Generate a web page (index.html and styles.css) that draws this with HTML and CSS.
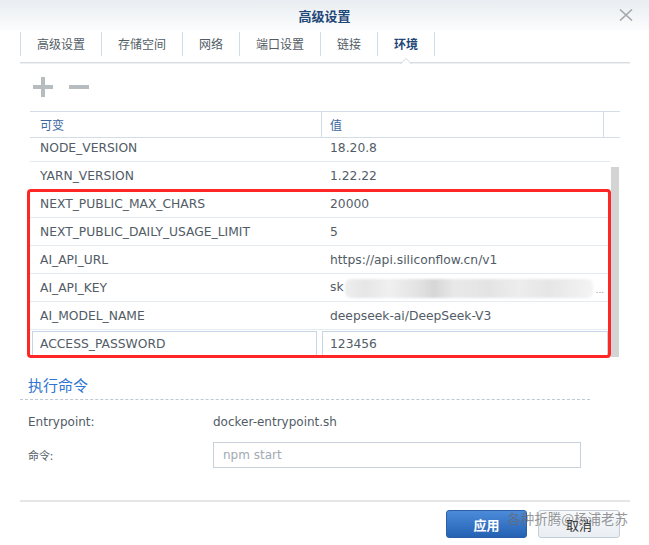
FILE: index.html
```html
<!DOCTYPE html>
<html lang="zh-CN">
<head>
<meta charset="UTF-8">
<title>高级设置</title>
<meta name="viewport" content="width=device-width, initial-scale=1.0">

<link rel="stylesheet" href="styles.css">
</head>

<body>

<div class="dialog">

    <div class="titlebar">
        <span class="title">高级设置</span>
        <svg class="close" width="14" height="12" viewBox="0 0 14 12">
            <path d="M1 0.5 L13 11.5 M13 0.5 L1 11.5" stroke="#a3a8ad" stroke-width="1.6" fill="none"/>
        </svg>
    </div>

    <div class="tabs">
        <span class="tab">高级设置</span>
        <span class="tab">存储空间</span>
        <span class="tab">网络</span>
        <span class="tab">端口设置</span>
        <span class="tab">链接</span>
        <span class="tab active">环境</span>
    </div>

    <div class="toolbar">
        <svg width="20" height="20" viewBox="0 0 20 20">
            <rect x="8" y="0" width="4" height="20" fill="#b7bcc1"/>
            <rect x="0" y="8" width="20" height="4" fill="#b7bcc1"/>
        </svg>
        <svg width="20" height="20" viewBox="0 0 20 20">
            <rect x="0" y="8" width="20" height="4" fill="#b7bcc1"/>
        </svg>
    </div>

    <!-- environment variables -->
    <div class="grid">
        <div class="grid-head">
            <div class="head-name">可变</div>
            <div class="head-value">值</div>
            <div class="head-pad"></div>
        </div>
        <div class="grid-main">
            <div class="grid-body">
                <div class="rows">
                    <div class="row"><div class="cell-name">NODE_VERSION</div><div class="cell-value">18.20.8</div></div>
                    <div class="row"><div class="cell-name">YARN_VERSION</div><div class="cell-value">1.22.22</div></div>
                    <div class="row"><div class="cell-name">NEXT_PUBLIC_MAX_CHARS</div><div class="cell-value">20000</div></div>
                    <div class="row"><div class="cell-name">NEXT_PUBLIC_DAILY_USAGE_LIMIT</div><div class="cell-value">5</div></div>
                    <div class="row"><div class="cell-name">AI_API_URL</div><div class="cell-value">https://api.siliconflow.cn/v1</div></div>
                    <div class="row">
                        <div class="cell-name">AI_API_KEY</div>
                        <div class="cell-value key">sk<span class="mosaic"></span><span class="more">...</span></div>
                    </div>
                    <div class="row"><div class="cell-name">AI_MODEL_NAME</div><div class="cell-value">deepseek-ai/DeepSeek-V3</div></div>
                    <div class="row editing">
                        <div class="cell-name"><div class="edit">ACCESS_PASSWORD</div></div>
                        <div class="cell-value"><div class="edit">123456</div></div>
                    </div>
                </div>
            </div>
            <div class="scrollbar"><div class="thumb"></div></div>
        </div>
        <div class="highlight"></div>
    </div>

    <div class="exec">
        <div class="exec-title">执行命令</div>
        <div class="form-row first">
            <span class="form-label">Entrypoint:</span>
            <span>docker-entrypoint.sh</span>
        </div>
        <div class="form-row">
            <span class="form-label cjk">命令:</span>
            <input class="cmd" type="text" placeholder="npm start">
        </div>
    </div>

    <div class="footer">
        <button class="btn primary">应用</button>
        <button class="btn">取消</button>
    </div>

    <div class="watermark">各种折腾@杨浦老苏</div>

</div>

</body>
</html>
```

FILE: styles.css
```css
* {
    margin: 0;
    padding: 0;
    box-sizing: border-box;
}

body {
    width: 649px;
    height: 545px;
    overflow: hidden;
    background: #fff;
    font-family: "DejaVu Sans", "Noto Sans CJK SC", sans-serif;
    color: #525c66;
}

.dialog {
    position: relative;
    height: 545px;
    display: flex;
    flex-direction: column;
}

.titlebar {
    height: 30px;
    position: relative;
    display: flex;
    align-items: center;
    justify-content: center;
    background: linear-gradient(#e9edf1, #fbfcfd);
}

.title {
    font-family: "Noto Sans CJK SC", sans-serif;
    font-size: 13px;
    font-weight: bold;
    color: #1f4778;
}

.close {
    position: absolute;
    right: 16px;
    top: 9px;
}

/* Tabs */
.tabs {
    display: flex;
    height: 33px;
    margin: 0 19px 0 20px;
    border-bottom: 1px solid #d8dde2;
    box-shadow: 0 1px 0 #eef0f2;
}

.tab {
    position: relative;
    margin-top: 2px;
    height: 24px;
    padding: 0 16px;
    border-left: 1px solid #d3dde7;
    font-family: "Noto Sans CJK SC", sans-serif;
    font-size: 12px;
    line-height: 24px;
    color: #525c66;
}

.tab:last-child {
    border-right: 1px solid #d3dde7;
}

.tab.active {
    font-weight: bold;
    color: #1f4778;
}

.tab.active::before,
.tab.active::after {
    content: "";
    position: absolute;
    left: 50%;
    width: 0;
    height: 0;
    border-style: solid;
    border-color: transparent;
}

.tab.active::before {
    bottom: -8px;
    margin-left: -6px;
    border-width: 0 6px 6px;
    border-bottom-color: #d3d8dd;
}

.tab.active::after {
    bottom: -8px;
    margin-left: -5px;
    border-width: 0 5px 5px;
    border-bottom-color: #fff;
}

/* Toolbar */
.toolbar {
    display: flex;
    gap: 16px;
    height: 48px;
    padding: 14px 0 0 33px;
}

/* Grid */
.grid {
    position: relative;
    width: 590px;
    margin-left: 30px;
}

.grid-head {
    display: flex;
    height: 27px;
    border-top: 1px solid #d3dde8;
    border-bottom: 1px solid #d3dde8;
    font-family: "Noto Sans CJK SC", sans-serif;
    font-size: 12px;
    line-height: 26px;
    color: #3b68a0;
}

.head-name {
    width: 291px;
    padding-left: 10px;
}

.head-value {
    width: 282px;
    padding-left: 8px;
    border-left: 1px solid #d3dde8;
}

.head-pad {
    flex: 1;
    border-left: 1px solid #d3dde8;
}

.grid-main {
    display: flex;
    height: 220px;
}

.grid-body {
    width: 580px;
    overflow: hidden;
}

.rows {
    margin-top: -4px;
}

.row {
    display: flex;
    height: 28px;
    border-bottom: 1px solid #e6ebf0;
    font-size: 12.3px;
    line-height: 29px;
    white-space: nowrap;
}

.cell-name {
    width: 291px;
    padding-left: 10px;
}

.cell-value {
    flex: 1;
    padding-left: 9px;
}

.key {
    display: flex;
    align-items: center;
}

.mosaic {
    width: 248px;
    height: 19px;
    margin: 2px 0 0 1px;
    border-radius: 6px;
    background: linear-gradient(90deg, #eeeeee 0%, #e6e6e6 8%, #f0f0f0 18%, #e2e2e2 30%, #d6d6d6 36%, #e9e9e9 44%, #e4e4e4 58%, #ededed 70%, #e6e6e6 82%, #f4f4f4 100%);
    filter: blur(1px);
}

.more {
    font-size: 9px;
    margin-left: 3px;
    color: #8a9096;
    padding-top: 6px;
}

.row.editing .cell-name,
.row.editing .cell-value {
    padding: 1px 0 0;
}

.edit {
    height: 26px;
    padding-left: 7px;
    border: 1px solid #c7d6e6;
    line-height: 25px;
}

.row.editing .cell-name .edit {
    width: 285px;
    margin-left: 2px;
}

.row.editing .cell-value .edit {
    width: 286px;
    margin-left: 1px;
}

.scrollbar {
    width: 10px;
    padding: 29px 1px 0;
}

.thumb {
    height: 190px;
    background: #d4d4d4;
}

/* red annotation box */
.highlight {
    position: absolute;
    left: -3px;
    top: 78px;
    width: 584px;
    height: 169px;
    border: 3px solid #ff2626;
    border-radius: 4px;
}

/* Exec section */
.exec {
    width: 570px;
    margin: 17px 0 0 20px;
}

.exec-title {
    padding: 0 0 4px 8px;
    border-bottom: 1px dashed #bcc8d4;
    font-family: "Noto Sans CJK SC", sans-serif;
    font-size: 15px;
    line-height: 20px;
    color: #2f74d0;
}

.form-row {
    display: flex;
    align-items: center;
    padding-left: 8px;
    margin-top: 9px;
    font-size: 12px;
}

.form-row.first {
    height: 22px;
    margin-top: 11px;
}

.form-label {
    width: 185px;
}

.cjk {
    font-family: "Noto Sans CJK SC", sans-serif;
    font-size: 11px;
}

.cmd {
    width: 368px;
    height: 26px;
    padding-left: 9px;
    border: 1px solid #c8d1da;
    font-family: "DejaVu Sans", sans-serif;
    font-size: 12px;
    color: #525c66;
    outline: none;
}

.cmd::placeholder {
    color: #a2aab2;
}

/* Footer */
.footer {
    display: flex;
    justify-content: flex-end;
    gap: 11px;
    margin: auto 19px 0 20px;
    height: 45px;
    padding: 8px 10px 0 0;
    border-top: 2px solid #e4e6e8;
}

.btn {
    width: 82px;
    height: 28px;
    border: 1px solid #c3ced9;
    border-radius: 3px;
    background: linear-gradient(#f7f9fb, #e9eef3);
    font-family: "Noto Sans CJK SC", sans-serif;
    font-size: 13px;
    color: #333;
}

.btn.primary {
    width: 81px;
    border-color: #2a5fa8;
    background: linear-gradient(#4b8bd9, #2462b4);
    color: #fff;
    font-weight: bold;
}

.watermark {
    position: absolute;
    right: 21px;
    top: 508px;
    font-family: "Noto Sans CJK SC", sans-serif;
    font-size: 13.5px;
    color: rgba(105, 105, 105, 0.7);
}
```
